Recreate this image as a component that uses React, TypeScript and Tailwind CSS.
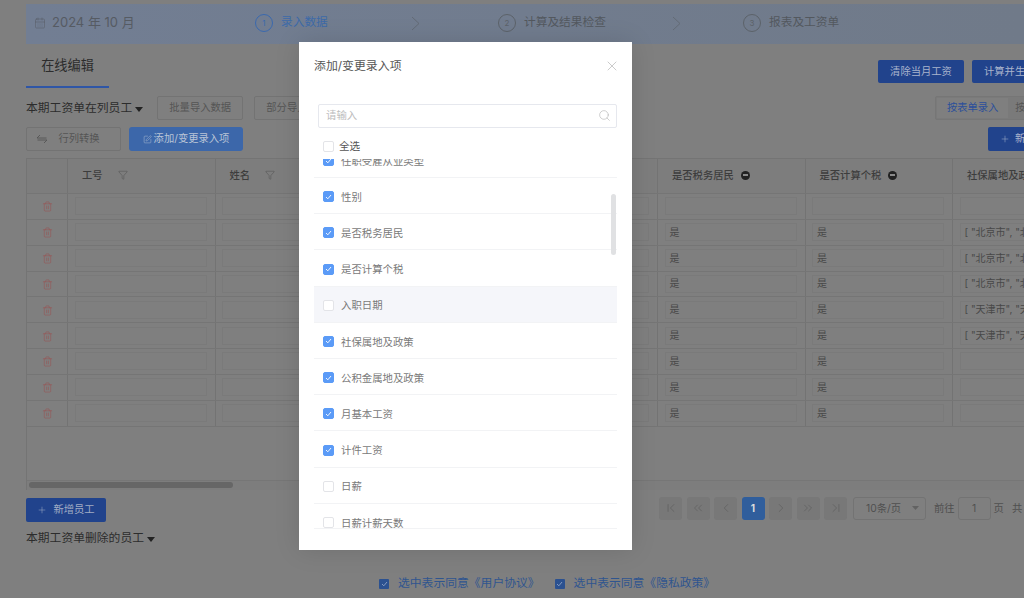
import {
  CalendarDays,
  ChevronFirst,
  ChevronLast,
  ChevronLeft,
  ChevronRight,
  ChevronsLeft,
  ChevronsRight,
  Funnel,
  Plus,
  Search,
  SquarePen,
  Trash2,
  X,
} from 'lucide-react';

const FONT = "font-['Inter','Noto_Sans_CJK_SC',sans-serif]";

const FIELDS = [
  { label: '性别', checked: true },
  { label: '是否税务居民', checked: true },
  { label: '是否计算个税', checked: true },
  { label: '入职日期', checked: false, hover: true },
  { label: '社保属地及政策', checked: true },
  { label: '公积金属地及政策', checked: true },
  { label: '月基本工资', checked: true },
  { label: '计件工资', checked: true },
  { label: '日薪', checked: false },
  { label: '日薪计薪天数', checked: false },
];

const ROWS = [
  { yes: false, place: '' },
  { yes: true, place: '[ "北京市", "北京市"]' },
  { yes: true, place: '[ "北京市", "北京市"]' },
  { yes: true, place: '[ "北京市", "北京市"]' },
  { yes: true, place: '[ "天津市", "天津市"]' },
  { yes: true, place: '[ "天津市", "天津市"]' },
  { yes: true, place: '' },
  { yes: true, place: '' },
  { yes: true, place: '' },
];

const Step = ({ n, label, active, className }: { n: number; label: string; active?: boolean; className: string }) => (
  <div className={`flex shrink-0 items-center gap-[8px] ${className}`}>
    <span
      className={`flex size-[18px] items-center justify-center rounded-full border-[1.3px] text-[8px] ${
        active ? 'border-[#3a69ae] text-[#3a69ae]' : 'border-[#5c6269] text-[#5c6269]'
      }`}
    >
      {n}
    </span>
    <span className={`text-[11.7px] ${active ? 'text-[#3d6aa8]' : 'text-[#53585e]'}`}>{label}</span>
  </div>
);

const StepArrow = ({ className }: { className: string }) => (
  <div className={`shrink-0 ${className}`}>
    <svg width="9" height="15" viewBox="0 0 9 15" fill="none" stroke="#5f666e" strokeWidth="0.8">
      <path d="M1 1l7 6.5L1 14" />
    </svg>
  </div>
);

const GhostButton = ({ children, className }: { children: React.ReactNode; className: string }) => (
  <div className={`flex h-[24px] shrink-0 items-center justify-center rounded-[2px] border border-[#737373] text-[10.3px] text-[#555555] ${className}`}>
    {children}
  </div>
);

const HeadCell = ({ label, icon }: { label: string; icon?: 'filter' | 'minus' }) => (
  <div className="flex items-center border-l border-[#737373] pl-[14px] text-[10.3px] font-medium text-[#3d3d3d]">
    <span>{label}</span>
    {icon === 'filter' && <Funnel className="ml-[15px] mb-[2px] size-[10px] text-[#505050]" strokeWidth={1.2} />}
    {icon === 'minus' && (
      <span className="mb-[2px] ml-[7px] flex size-[9px] items-center justify-center rounded-full bg-[#222222]">
        <span className="h-[1.5px] w-[5px] bg-[#8a8a8a]" />
      </span>
    )}
  </div>
);

const InputCell = ({ value }: { value?: string }) => (
  <div className="flex items-center border-l border-[#737373] pr-[8px] pl-[6.5px]">
    <div className="flex h-[18px] w-full items-center overflow-hidden whitespace-nowrap border border-[#7a7a7a] pl-[4px] text-[10px] text-[#484848]">
      {value}
    </div>
  </div>
);

const CheckMark = ({ checked, className }: { checked: boolean; className?: string }) => (
  <span
    className={`flex size-[11px] shrink-0 items-center justify-center rounded-[2px] border ${
      checked ? 'border-[#5b9bf7] bg-[#5b9bf7]' : 'border-[#e3e4e8] bg-white'
    } ${className ?? ''}`}
  >
    {checked && (
      <svg width="7" height="6" viewBox="0 0 7 6" fill="none" stroke="#ffffff" strokeWidth="0.9">
        <path d="M1 3l1.8 1.8L6 1" />
      </svg>
    )}
  </span>
);

const PageButton = ({ children, active }: { children: React.ReactNode; active?: boolean }) => (
  <span
    className={`flex h-[22.5px] w-[23px] items-center justify-center rounded-[3px] ${
      active ? 'bg-[#305e9c] text-[10px] font-bold text-[#dddddd]' : 'bg-[#787878] text-[#5e5e5e]'
    }`}
  >
    {children}
  </span>
);

const FieldRow = ({ label, checked, hover }: { label: string; checked: boolean; hover?: boolean }) => (
  <div className={`flex h-[36.2px] items-center border-b border-[#f2f3f5] pt-[2px] pl-[9px] text-[10.4px] text-[#7a7a7a] ${hover ? 'bg-[#f5f6fa]' : ''}`}>
    <CheckMark checked={checked} />
    <span className="mt-[2px] ml-[7px]">{label}</span>
  </div>
);

const AddFieldModal = () => (
  <div className="absolute top-[42px] left-[299px] h-[508px] w-[333px] bg-white shadow-[0_0_24px_rgba(0,0,0,0.12)]">
    <div className="flex h-[46px] items-center justify-between pt-[2px] pr-[16px] pl-[15px]">
      <span className="text-[11.9px] text-[#555555]">添加/变更录入项</span>
      <X className="-mr-[4px] size-[16px] text-[#a8a8a8]" strokeWidth={0.9} />
    </div>
    <div className="mt-[16px] ml-[19px] flex h-[23.5px] w-[299px] items-center justify-between rounded-[2px] border border-[#e6e8ee] pr-[5px] pl-[7px] text-[10.4px] text-[#bdbdbd]">
      <span>请输入</span>
      <Search className="size-[13px] text-[#a8a8a8]" strokeWidth={1} />
    </div>
    <div className="mt-[13.5px] flex h-[11px] items-center pl-[24px] text-[10.6px] text-[#555555]">
      <CheckMark checked={false} />
      <span className="ml-[5px]">全选</span>
    </div>
    <div className="relative mt-[6.5px] ml-[15px] h-[370px] w-[303px] overflow-hidden border-b border-[#f2f3f5]">
      <div className="-mt-[16.6px]">
        <FieldRow label="任职受雇从业类型" checked />
        {FIELDS.map(field => (
          <FieldRow key={field.label} label={field.label} checked={field.checked} hover={field.hover} />
        ))}
      </div>
      <div className="absolute top-[35px] right-[1px] h-[61px] w-[5px] rounded-full bg-[#e0e1e3]" />
    </div>
  </div>
);

export default function App() {
  return (
    <div className={`relative h-[598px] w-[1024px] overflow-hidden bg-[#7f7f7f] pt-[4px] pl-[26px] ${FONT}`}>
      <div className="flex h-[40px] items-center bg-gradient-to-r from-[#727e93] to-[#707a89] pb-[2px]">
        <div className="flex w-[229px] shrink-0 items-center gap-[6px] pl-[8px] text-[13px] text-[#565b63]">
          <CalendarDays className="size-[12px]" strokeWidth={1} />
          <span>2024 年 10 月</span>
        </div>
        <Step n={1} label="录入数据" active className="w-[156px]" />
        <StepArrow className="w-[87px]" />
        <Step n={2} label="计算及结果检查" className="w-[174px]" />
        <StepArrow className="w-[71px]" />
        <Step n={3} label="报表及工资单" className="w-[200px]" />
      </div>

      <div className="flex h-[45px] items-start">
        <div className="mt-[12px] flex h-[32px] w-[83px] shrink-0 items-start justify-center border-b-2 border-[#2f56a6] text-[13.2px] text-[#2c2c2c]">
          在线编辑
        </div>
        <div className="mt-[16px] ml-[769px] flex shrink-0 gap-[8px]">
          <div className="flex h-[23px] w-[86px] items-center justify-center rounded-[2px] bg-[#21438c] text-[10.3px] text-[#a9b4cc]">清除当月工资</div>
          <div className="flex h-[23px] w-[86px] items-center justify-start whitespace-nowrap rounded-[2px] bg-[#21438c] pl-[12px] text-[10.3px] text-[#a9b4cc]">计算并生成工资</div>
        </div>
      </div>

      <div className="mt-[7px] flex h-[24px] items-center">
        <span className="mt-[2px] shrink-0 whitespace-nowrap text-[11.8px] text-[#2c2c2c]">本期工资单在列员工</span>
        <svg className="mt-[2px] ml-[3px] shrink-0" width="8" height="5" viewBox="0 0 8 5"><path d="M0 0h8L4 5z" fill="#222222" /></svg>
        <GhostButton className="ml-[14px] w-[86px]">批量导入数据</GhostButton>
        <GhostButton className="ml-[11px] w-[86px]">部分导入数据</GhostButton>
        <div className="ml-[595px] flex h-[24px] w-[120px] shrink-0 items-center rounded-[2px] border border-[#767676] bg-[#7a7a7a] p-[1px] text-[10.3px]">
          <span className="flex h-full w-[71px] shrink-0 items-center justify-center bg-[#7f7f7f] text-[#2c4f9b]">按表单录入</span>
          <span className="pl-[7px] text-[#555555]">按</span>
        </div>
      </div>

      <div className="mt-[7px] flex h-[24px] items-center">
        <GhostButton className="w-[95px] gap-[11px] pr-[10px]">
          <svg width="10" height="8" viewBox="0 0 10 8" fill="none" stroke="#555555" strokeWidth="0.9">
            <path d="M0 3h9.5M0 3l3-3M10 5H.5M10 5L7 8" />
          </svg>
          行列转换
        </GhostButton>
        <div className="ml-[8px] flex h-[24px] w-[114px] shrink-0 items-center justify-center gap-[2px] rounded-[3px] bg-[#3c67aa] text-[10.3px] text-[#b9c4d6]">
          <SquarePen className="size-[9px]" strokeWidth={1.2} />
          添加/变更录入项
        </div>
        <div className="ml-[745px] flex h-[24px] w-[80px] shrink-0 items-center gap-[5px] rounded-[2px] bg-[#21438c] pl-[12px] text-[10.3px] text-[#a9b4cc]">
          <Plus className="size-[10px]" strokeWidth={1.2} />
          新增
        </div>
      </div>

      <div className="mt-[7px] h-[332px] overflow-hidden border-t border-l border-[#747474]">
        <div className="flex h-[35px] w-[1100px] border-b border-[#757575] bg-[#7d7d7d]">
          <div className="grid w-full grid-cols-[40px_repeat(7,147.5px)]">
            <div />
            <HeadCell label="工号" icon="filter" />
            <HeadCell label="姓名" icon="filter" />
            <HeadCell label="证件类型" />
            <HeadCell label="证件号码" />
            <HeadCell label="是否税务居民" icon="minus" />
            <HeadCell label="是否计算个税" icon="minus" />
            <HeadCell label="社保属地及政策" />
          </div>
        </div>
        {ROWS.map((row, i) => (
          <div key={i} className="grid h-[25.85px] w-[1100px] grid-cols-[40px_repeat(7,147.5px)] border-b border-[#757575]">
            <div className="flex items-center justify-center pt-[1px]">
              <Trash2 className="size-[11px] text-[#9a5353]" strokeWidth={1.2} />
            </div>
            <InputCell />
            <InputCell />
            <InputCell />
            <InputCell />
            <InputCell value={row.yes ? '是' : ''} />
            <InputCell value={row.yes ? '是' : ''} />
            <InputCell value={row.place} />
          </div>
        ))}
        <div className="mt-[53px] flex h-[10px] items-center border-t border-[#767676] bg-[#7d7d7d] pl-[2px]">
          <div className="h-[6px] w-[204px] rounded-full bg-[#666666]" />
        </div>
      </div>

      <div className="mt-[8px] flex h-[24px] items-start">
        <div className="flex h-[24px] w-[80px] shrink-0 items-center justify-center gap-[6px] rounded-[2px] bg-[#21438c] text-[10.3px] text-[#a0acc4]">
          <Plus className="size-[10px]" strokeWidth={1.2} />
          新增员工
        </div>
        <div className="-mt-[1px] ml-[553px] flex shrink-0 items-center gap-[4.5px]">
          <PageButton><ChevronFirst className="size-[14px]" strokeWidth={1.2} /></PageButton>
          <PageButton><ChevronsLeft className="size-[14px]" strokeWidth={1.2} /></PageButton>
          <PageButton><ChevronLeft className="size-[14px]" strokeWidth={1.2} /></PageButton>
          <PageButton active>1</PageButton>
          <PageButton><ChevronRight className="size-[14px]" strokeWidth={1.2} /></PageButton>
          <PageButton><ChevronsRight className="size-[14px]" strokeWidth={1.2} /></PageButton>
          <PageButton><ChevronLast className="size-[14px]" strokeWidth={1.2} /></PageButton>
        </div>
        <div className="-mt-[1px] ml-[6px] flex h-[22.5px] w-[73px] shrink-0 items-center justify-between rounded-[3px] border border-[#737373] pr-[6px] pl-[12px] text-[10.3px] text-[#505050]">
          10条/页
          <svg width="7" height="4" viewBox="0 0 7 4"><path d="M0 0h7L3.5 4z" fill="#626262" /></svg>
        </div>
        <div className="-mt-[1px] ml-[8px] flex h-[22.5px] shrink-0 items-center text-[10.3px] text-[#505050]">
          <span>前往</span>
          <span className="mx-[3px] flex h-[22.5px] w-[33px] items-center justify-center rounded-[3px] border border-[#737373]">1</span>
          <span>页</span>
          <span className="ml-[8px]">共</span>
        </div>
      </div>

      <div className="mt-[9px] flex h-[16px] items-center">
        <span className="text-[11.8px] text-[#2c2c2c]">本期工资单删除的员工</span>
        <svg className="ml-[3px]" width="8" height="5" viewBox="0 0 8 5"><path d="M0 0h8L4 5z" fill="#222222" /></svg>
      </div>

      <div className="mt-[29px] ml-[353px] flex h-[16px] items-center text-[11.8px] text-[#2f558f]">
        <span className="flex size-[10px] items-center justify-center rounded-[1px] bg-[#2b5190]">
          <svg width="7" height="6" viewBox="0 0 7 6" fill="none" stroke="#8fa3c4" strokeWidth="0.9"><path d="M1 3l1.8 1.8L6 1" /></svg>
        </span>
        <span className="ml-[9px]">选中表示同意《用户协议》</span>
        <span className="ml-[15px] flex size-[10px] items-center justify-center rounded-[1px] bg-[#2b5190]">
          <svg width="7" height="6" viewBox="0 0 7 6" fill="none" stroke="#8fa3c4" strokeWidth="0.9"><path d="M1 3l1.8 1.8L6 1" /></svg>
        </span>
        <span className="ml-[9px]">选中表示同意《隐私政策》</span>
      </div>

      <AddFieldModal />
    </div>
  );
}
